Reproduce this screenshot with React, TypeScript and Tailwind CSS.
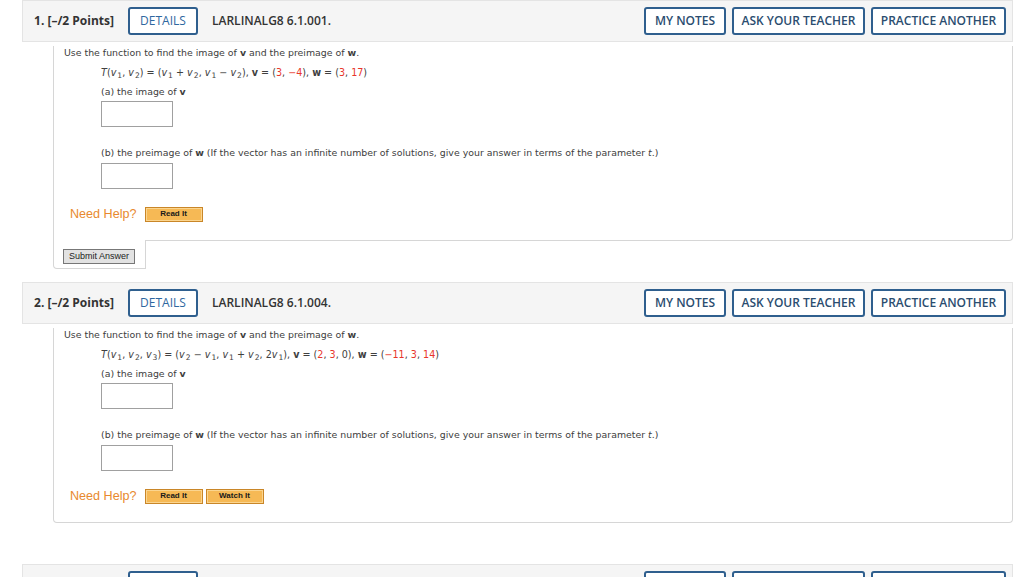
import React from 'react';

const Red: React.FC<{ children: React.ReactNode }> = ({ children }) => (
    <span className="text-[#e8352b]">{children}</span>
);

const V: React.FC<{ s?: string; pre?: string }> = ({ s, pre }) => (
    <span>
        {pre}
        <i>v</i>
        {s && <sub className="text-[7.6px] ml-[1px]">{s}</sub>}
    </span>
);

const HelpButton: React.FC<{ label: string }> = ({ label }) => (
    <span className="inline-flex items-center justify-center w-[58px] h-[15px] bg-[#f6b955] border border-[#c98628] shadow-[inset_0_0_0_1px_#fbd58f] text-[8px] font-bold text-[#1a1a1a] font-['Liberation_Sans',Arial,sans-serif]">
        {label}
    </span>
);

const OutlineButton: React.FC<{ label: string; w: string }> = ({ label, w }) => (
    <button className={`${w} h-[28px] border-2 border-[#2f5f8e] rounded-[3px] bg-white text-[12px] font-semibold text-[#2b4d6f] font-['Open_Sans',sans-serif]`}>
        {label}
    </button>
);

const Header: React.FC<{ num: number; code: string }> = ({ num, code }) => (
    <div className="h-[42px] bg-[#f5f5f5] border border-[#e4e4e4] flex items-center pl-[11px] pr-[6px] font-['Open_Sans',sans-serif]">
        <span className="font-bold text-[12px] text-[#333]">{num}. [–/2 Points]</span>
        <button className="ml-[14px] w-[70px] h-[28px] border-2 border-[#2f5f8e] rounded-[3px] bg-white text-[12px] text-[#2f67a0]">
            DETAILS
        </button>
        <span className="ml-[14px] font-semibold text-[12px] text-[#333]">{code}</span>
        <div className="ml-auto flex gap-[6px]">
            <OutlineButton label="MY NOTES" w="w-[82px]" />
            <OutlineButton label="ASK YOUR TEACHER" w="w-[133px]" />
            <OutlineButton label="PRACTICE ANOTHER" w="w-[135px]" />
        </div>
    </div>
);

const Body: React.FC<{ formula: React.ReactNode; watch?: boolean; tab?: boolean }> = ({ formula, watch, tab }) => (
    <div
        className={`ml-[31px] border-l border-r border-b border-[#d6d6d6] ${tab ? 'rounded-br-[4px]' : 'rounded-b-[4px]'} pb-[18px] text-[9.4px] text-[#404040] font-['DejaVu_Sans',Verdana,sans-serif]`}
    >
        <div className="pl-[10px]">
            <div className="mt-[4px] h-[14px] leading-[14px]">
                Use the function to find the image of <b>v</b> and the preimage of <b>w</b>.
            </div>
            <div className="pl-[37px]">
                <div className="mt-[6px] h-[14px] leading-[14px] text-[9.6px]">{formula}</div>
                <div className="mt-[5px] h-[14px] leading-[14px]">
                    (a) the image of <b>v</b>
                </div>
                <div className="mt-[2px] w-[72px] h-[26px] border border-[#a0a0a0] bg-white" />
                <div className="mt-[19px] h-[14px] leading-[14px]">
                    (b) the preimage of <b>w</b> (If the vector has an infinite number of solutions, give your answer in terms of the parameter <i>t</i>.)
                </div>
                <div className="mt-[3px] w-[72px] h-[26px] border border-[#a0a0a0] bg-white" />
            </div>
        </div>
        <div className="mt-[17px] pl-[16px] h-[16px] flex items-center gap-[3px]">
            <span className="text-[12.6px] text-[#e8892e] font-['Liberation_Sans',Arial,sans-serif] mr-[5px]">Need Help?</span>
            <HelpButton label="Read It" />
            {watch && <HelpButton label="Watch It" />}
        </div>
    </div>
);

export default function App() {
    return (
        <div className="bg-white min-h-screen w-[1024px] overflow-hidden">
            <div className="ml-[22px] w-[991px]">
                <Header num={1} code="LARLINALG8 6.1.001." />
                <Body
                    tab
                    formula={
                        <span>
                            <i>T</i>(<V s="1" />, <V s="2" />) = (<V s="1" /> + <V s="2" />, <V s="1" /> − <V s="2" />), <b>v</b> = (<Red>3</Red>, <Red>−4</Red>), <b>w</b> = (<Red>3</Red>, <Red>17</Red>)
                        </span>
                    }
                />
                <div className="ml-[31px] -mt-px w-[93px] h-[29px] bg-white border-l border-r border-b border-[#d6d6d6] rounded-bl-[4px] pl-[9px] pt-[9px] flex items-start">
                    <button className="w-[72px] h-[15px] bg-[#e2e2e2] border border-[#777] text-[9px] text-[#222] leading-[13px] font-['Liberation_Sans',Arial,sans-serif]">
                        Submit Answer
                    </button>
                </div>

                <div className="mt-[13px]">
                    <Header num={2} code="LARLINALG8 6.1.004." />
                    <Body
                        watch
                        formula={
                            <span>
                                <i>T</i>(<V s="1" />, <V s="2" />, <V s="3" />) = (<V s="2" /> − <V s="1" />, <V s="1" /> + <V s="2" />, <V pre="2" s="1" />), <b>v</b> = (<Red>2</Red>, <Red>3</Red>, 0), <b>w</b> = (<Red>−11</Red>, <Red>3</Red>, <Red>14</Red>)
                            </span>
                        }
                    />
                </div>

                <div className="mt-[41px]">
                    <Header num={3} code="LARLINALG8 6.1.007." />
                </div>
            </div>
        </div>
    );
}
